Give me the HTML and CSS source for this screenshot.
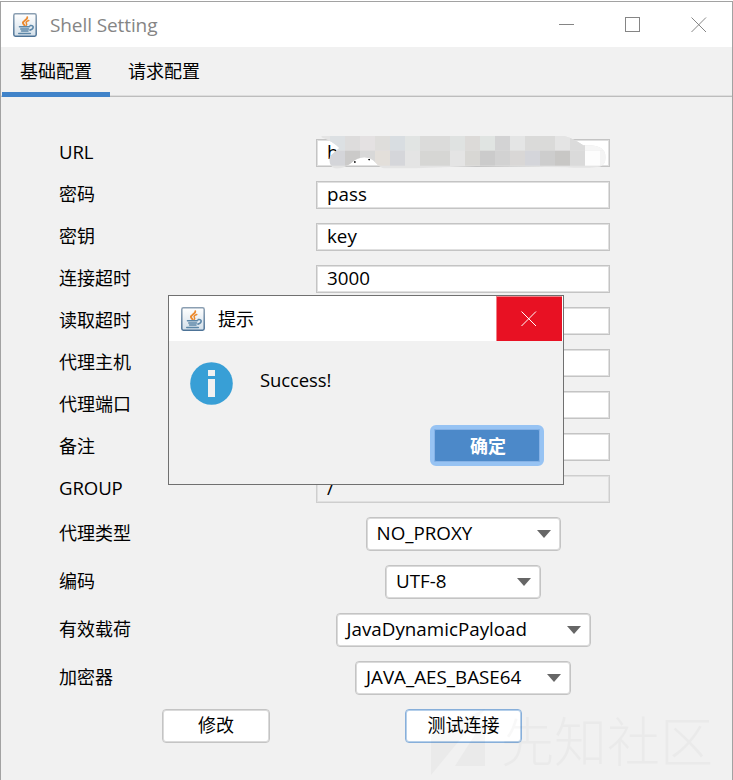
FILE: index.html
```html
<!DOCTYPE html>
<html lang="zh-CN">
<head>
<meta charset="utf-8">
<title>Shell Setting</title>
<link rel="stylesheet" href="styles.css">
</head>
<body>
<svg width="0" height="0" class="defs" aria-hidden="true">
  <defs>
    <linearGradient id="tile" x1="0" y1="0" x2="0" y2="1">
      <stop offset="0" stop-color="#ffffff"/><stop offset="1" stop-color="#d3dfe9"/>
    </linearGradient>
    <linearGradient id="edge" x1="0" y1="0" x2="0" y2="1">
      <stop offset="0" stop-color="#8b9fb2"/><stop offset="1" stop-color="#4d7397"/>
    </linearGradient>
  </defs>
  <symbol id="java" viewBox="0 0 24 24">
    <rect x=".8" y=".8" width="22.4" height="22.4" rx="1.6" fill="url(#tile)" stroke="url(#edge)" stroke-width="1.5"/>
    <g fill="none" stroke="#ec8a2f" stroke-linecap="round">
      <path d="M14.300 4.300c.6 2.600-4.800 3.400-4.300 6 .2 1 1.300 1.300 1.500 2.300" stroke-width="1.900"/>
      <path d="M15.800 7.500c-2.600.9-3.300 2-2.300 3.100.5.700.300 1.200-.4 1.900" stroke-width="1.500"/>
    </g>
    <g fill="none" stroke="#5c87a8" stroke-linecap="round" stroke-width="1.600">
      <path d="M6.500 13.800h9.700M7.800 16h7.700M8.600 18h6.400M17.200 12.600c4.300-.8 3.700 3.600-.2 4.500"/>
      <path d="M5.800 20.500h11.500"/>
    </g>
  </symbol>
</svg>
<div class="window">
  <header class="titlebar">
    <svg class="app-icon"><use href="#java"/></svg>
    <span class="title">Shell Setting</span>
    <svg class="controls" width="148" height="16" viewBox="0 0 148 16" fill="none" stroke="#858585" shape-rendering="crispEdges">
      <path d="M0 7.500h15M66.500 .5h14v14h-14z"/>
      <path d="M132.500 .5l14.500 14.500M147 .5l-14.500 14.500" shape-rendering="auto"/>
    </svg>
  </header>
  <nav class="tabs">
    <span class="tab active">基础配置</span>
    <span class="tab">请求配置</span>
  </nav>
  <main class="form">
    <div class="row"><label class="latin">URL</label><div class="field url">h
      <svg class="mosaic" width="290" height="36" viewBox="0 0 870 108">
        <clipPath id="blob"><path d="M4 8H730Q765 18 790 37Q857 32 857 72Q857 96 840 101Q790 107 740 103L470 99L290 106H190Q174 98 170 92Q135 54 91 92Q55 115 36 102Q20 80 34 66L58 45Q38 25 4 13Z"/></clipPath>
        <g clip-path="url(#blob)">
          <path fill="#e4e4e4" d="M0 8h870v100H0z"/>
          <g id="tiles"></g>
        </g>
        <path d="M102 85h5v4h-5zM144 78h6v4h-4z"/>
      </svg></div></div>
    <div class="row"><label>密码</label><div class="field">pass</div></div>
    <div class="row"><label>密钥</label><div class="field">key</div></div>
    <div class="row"><label>连接超时</label><div class="field">3000</div></div>
    <div class="row"><label>读取超时</label><div class="field"></div></div>
    <div class="row"><label>代理主机</label><div class="field"></div></div>
    <div class="row"><label>代理端口</label><div class="field"></div></div>
    <div class="row"><label>备注</label><div class="field"></div></div>
    <div class="row"><label class="latin">GROUP</label><div class="field disabled">/</div></div>
    <div class="row tall"><label>代理类型</label><div class="combo proxy"><span>NO_PROXY</span></div></div>
    <div class="row tall"><label>编码</label><div class="combo encoding"><span>UTF-8</span></div></div>
    <div class="row tall"><label>有效载荷</label><div class="combo payload"><span>JavaDynamicPayload</span></div></div>
    <div class="row tall"><label>加密器</label><div class="combo crypto"><span>JAVA_AES_BASE64</span></div></div>
    <div class="actions">
      <div class="button modify">修改</div>
      <div class="button test">测试连接</div>
    </div>
  </main>
  <div class="watermark">
    <svg width="62" height="66" viewBox="0 0 62 66"><path d="M0 25L54 0L0 66zM54 10V57H24z"/></svg>
    <span>先知社区</span>
  </div>
  <section class="dialog">
    <header class="dialog-title">
      <svg class="app-icon"><use href="#java"/></svg>
      <span>提示</span>
      <div class="close"><svg width="16" height="16" viewBox="0 0 16 16" stroke="#fff"><path d="M.5 .5l14.500 14.500M15 .5l-14.500 14.500"/></svg></div>
    </header>
    <div class="dialog-body">
      <svg class="info" width="43" height="43" viewBox="0 0 43 43"><circle cx="21.500" cy="21.500" r="21.300" fill="#389fd6"/><path fill="#f1f1f1" d="M18 8h7v6h-7zM18 17h7v18h-7z"/></svg>
      <span class="message">Success!</span>
    </div>
    <div class="ok">确定</div>
  </section>
</div>
<script src="mosaic.js"></script>
</body>
</html>
```
FILE: styles.css
```css
* { box-sizing: border-box; }
body {
  margin: 0;
  background: #fff;
  color: #000;
  font: 400 18px/28px "Open Sans", "Noto Sans CJK SC", sans-serif;
  overflow: hidden;
}
.defs { position: absolute; }
.window {
  position: relative;
  width: 733px;
  height: 779px;
  margin-top: 1px;
  border: 1px solid #a2a2a2;
  border-bottom: 0;
  background: #f1f1f1;
  overflow: hidden;
}
.titlebar {
  display: flex;
  align-items: center;
  height: 45px;
  padding: 0 25px 0 12px;
  background: #fff;
  color: #858585;
}
.app-icon { width: 24px; height: 24px; flex: none; }
.title { margin: 0 0 0 13px; font-size: 19px; letter-spacing: -0.1px; }
.controls { margin-left: auto; }
.tabs {
  display: flex;
  height: 50px;
  border-bottom: 1px solid #bdbdbd;
  box-shadow: inset 0 -1px #dedede;
}
.tab { width: 108px; padding: 10px 0 0 18px; white-space: nowrap; }
.tab:first-child { margin-left: 1px; }
.tab.active { height: 50px; border-bottom: 5px solid #4083c9; }
.form {
  display: flex;
  flex-direction: column;
  gap: 14px;
  padding: 42px 0 0 58px;
}
.row { display: grid; grid-template-columns: 257px 294px; height: 28px; }
.row.tall { height: 34px; line-height: 32px; }
label { line-height: 27px; white-space: nowrap; }
.tall label { line-height: 33px; }
.latin { font-size: 18.6px; line-height: 25px; letter-spacing: -0.1px; }
.field {
  position: relative;
  height: 28px;
  padding-left: 10px;
  border: 1px solid #c4c4c4;
  box-shadow: inset 0 0 0 1px #e0e0e0;
  background: #fff;
  font-size: 18.8px;
  line-height: 25px;
}
.disabled { background: #f1f1f1; border-color: #cecece; }
.mosaic { position: absolute; left: 3px; top: -6.67px; }
.combo {
  display: flex;
  align-items: center;
  justify-content: space-between;
  justify-self: center;
  height: 34px;
  padding: 0 9px 2px 10px;
  border: 1px solid #c4c4c4;
  border-radius: 4px;
  box-shadow: inset 0 0 0 1px #dadada;
  background: #fff;
  font-size: 18.8px;
  white-space: nowrap;
}
.combo::after {
  content: "";
  margin-top: 2px;
  border: 7px solid transparent;
  border-top: 8px solid #666;
  border-bottom: 0;
}
.proxy { width: 195px; }
.encoding { width: 156px; }
.payload { width: 255px; }
.crypto { width: 216px; }
.actions { display: flex; gap: 135px; padding-left: 103px; }
.button {
  height: 34px;
  border: 1px solid #c4c4c4;
  border-radius: 4px;
  box-shadow: inset 0 0 0 1px #dadada;
  background: #fff;
  line-height: 31px;
  text-align: center;
}
.modify { width: 108px; }
.test { width: 117px; border-color: #87afda; box-shadow: inset 0 0 0 1px #b5cfea; }
.watermark {
  position: absolute;
  left: 430px;
  top: 707px;
  display: flex;
  gap: 8px;
  opacity: .024;
  font: 300 53px/60px "Noto Sans CJK SC", sans-serif;
  white-space: nowrap;
}
.dialog {
  position: absolute;
  left: 167px;
  top: 293px;
  width: 396px;
  height: 190px;
  border: 1px solid #707070;
  background: #f1f1f1;
}
.dialog-title {
  display: flex;
  align-items: center;
  height: 45px;
  padding: 0 1px 0 12px;
  background: #fff;
}
.dialog-title span { margin: 1px 0 0 13px; }
.close {
  display: flex;
  align-items: center;
  justify-content: center;
  width: 66px;
  height: 45px;
  padding-right: 2px;
  margin-left: auto;
  border: 1px solid #f08088;
  border-width: 1px 0 0 1px;
  background: #e81123;
}
.dialog-body { display: flex; padding: 21px 0 0 21px; }
.message { margin: 4px 0 0 27px; font-size: 18.5px; letter-spacing: -0.1px; }
.ok {
  width: 114px;
  height: 41px;
  margin: 20px 0 0 261px;
  padding-left: 2px;
  border: 4px solid #97c3f3;
  border-radius: 6px;
  background: #4c89c9;
  box-shadow: inset 0 0 0 1px #86b2e6;
  color: #fff;
  font-weight: 700;
  line-height: 34px;
  text-align: center;
}
```
FILE: mosaic.js
```js
const rows = [
  "dce0e3 dddcdc e4e1e2 dedddb d8dde1 e1e4e3 dbdbda dbdbda dfe2e1 dcdad8 e0e4e2 d3d3d4 e4e5e5 dadad9 dadad9 e4e4e4 dbdbdb f6f6f6 f6f6f6",
  "d4d5d9 cbcac9 d8d8d8 e3dfda d5d6da e4e4e4 d6d6d4 d6d6d4 e4e4e4 d8d7d4 cbcbcb d2d2d2 d9d7d6 d4d5da cdcdcd c8c7c5 dadada fdfdfd f4f4f4"
];
document.getElementById("tiles").innerHTML = rows.map((row, y) =>
  row.split(" ").map((color, x) =>
    `<rect x="${30 + x * 45}" y="${8 + y * 45}" width="45" height="45" fill="#${color}"/>`
  ).join("")
).join("");
```
